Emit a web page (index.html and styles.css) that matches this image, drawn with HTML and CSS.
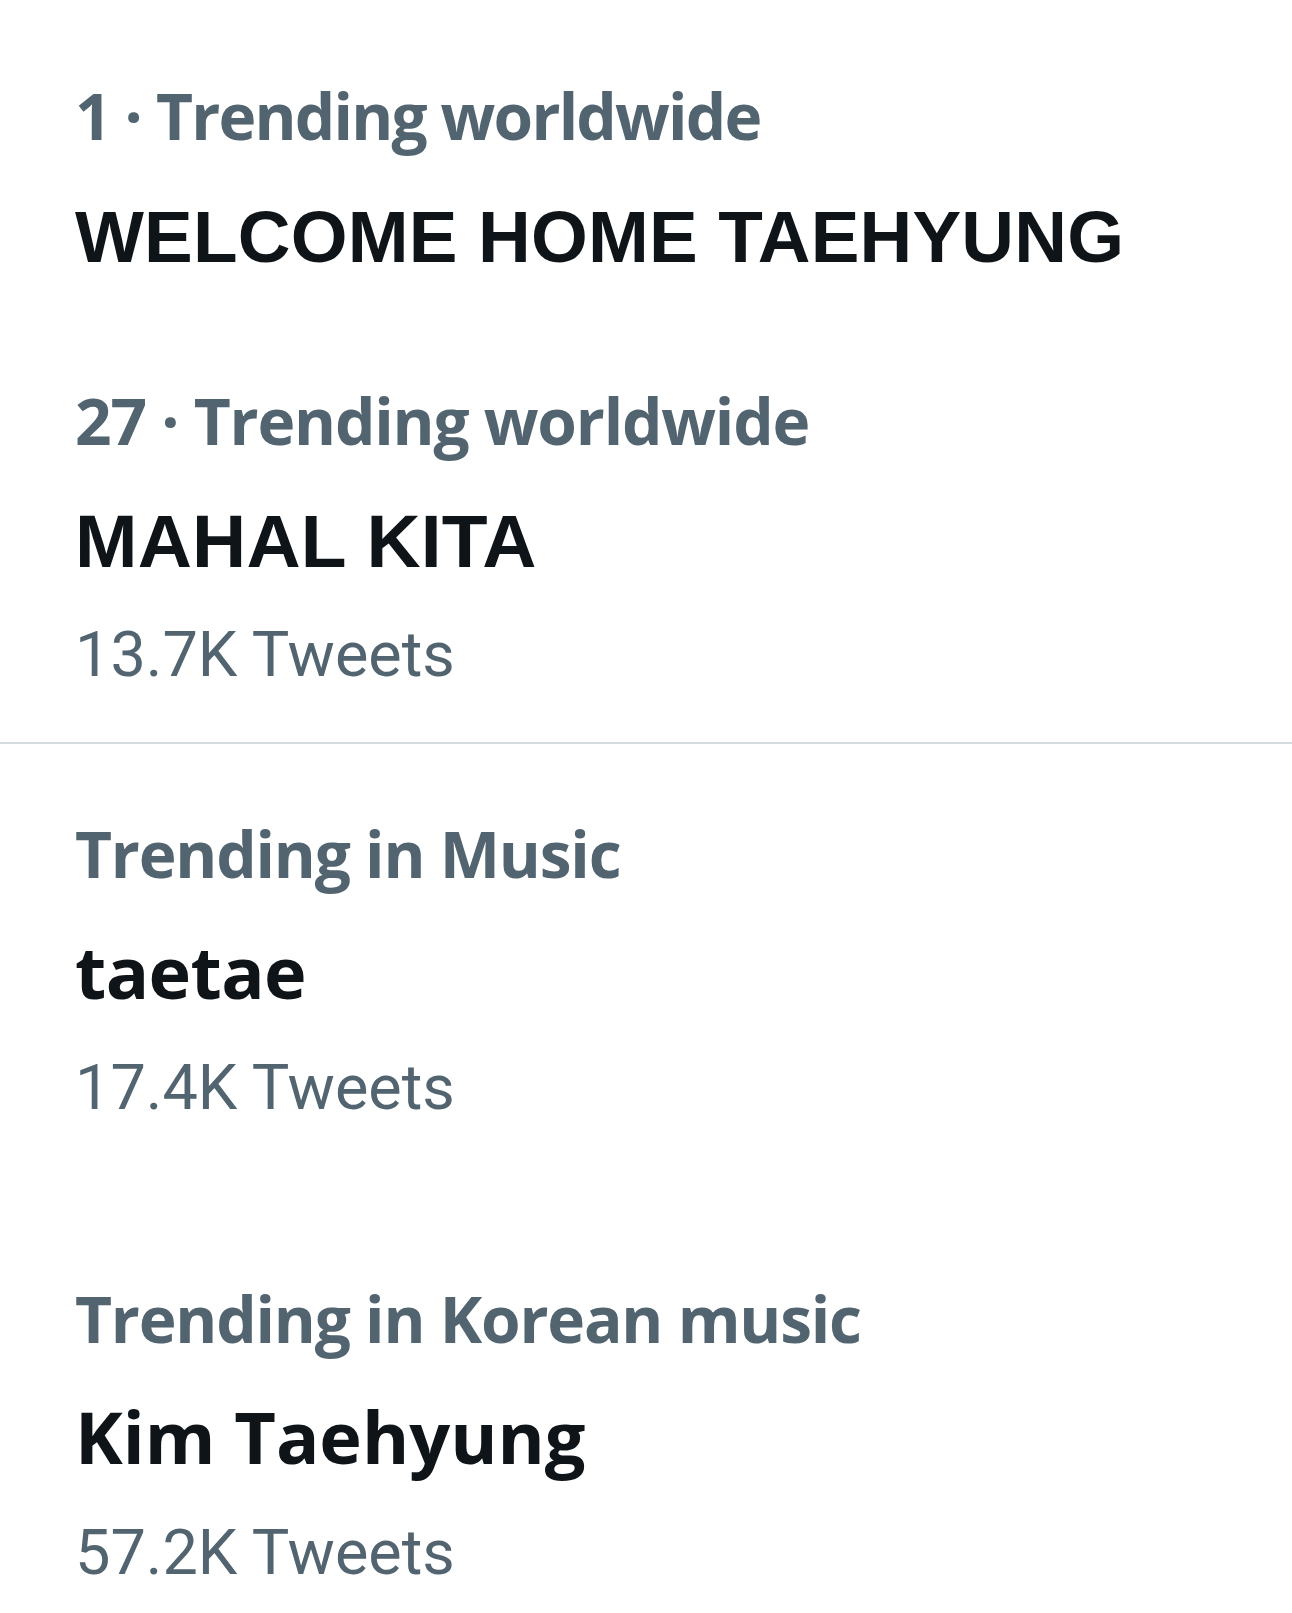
FILE: index.html
```
<!DOCTYPE html>
<html lang="en">
<head>
    <meta charset="UTF-8">
    <meta name="viewport" content="width=device-width, initial-scale=1.0">
    <title>Trends</title>
    <link rel="stylesheet" href="styles.css">
</head>
<body>
    <div class="trends">
        <div class="trend first">
            <div class="label">1 · Trending worldwide</div>
            <div class="title caps">WELCOME HOME TAEHYUNG</div>
        </div>
        <div class="trend second">
            <div class="label">27 · Trending worldwide</div>
            <div class="title caps">MAHAL KITA</div>
            <div class="count">13.7K Tweets</div>
        </div>
        <div class="divider"></div>
        <div class="trend third">
            <div class="label">Trending in Music</div>
            <div class="title">taetae</div>
            <div class="count">17.4K Tweets</div>
        </div>
        <div class="trend fourth">
            <div class="label">Trending in Korean music</div>
            <div class="title">Kim Taehyung</div>
            <div class="count">57.2K Tweets</div>
        </div>
    </div>
</body>
</html>
```

FILE: styles.css
```
body {
    margin: 0;
    background-color: #ffffff;
    font-family: "Open Sans", sans-serif;
}
.trends {
    display: flex;
    flex-direction: column;
    padding-top: 76px;
}
.trend {
    display: flex;
    flex-direction: column;
    padding-left: 75px;
}
.label {
    font-family: "Open Sans", sans-serif;
    font-weight: 700;
    font-size: 64px;
    line-height: 80px;
    letter-spacing: -1.2px;
    color: #536471;
    white-space: nowrap;
}
.first .label {
    letter-spacing: -1.8px;
}
.title {
    font-family: "Open Sans", sans-serif;
    font-weight: 700;
    font-size: 72px;
    line-height: 90px;
    letter-spacing: -0.6px;
    color: #0f1419;
    margin-top: 32px;
    white-space: nowrap;
}
.fourth .title {
    letter-spacing: 0;
}
.title.caps {
    font-family: "Liberation Sans", Arial, sans-serif;
    font-size: 73px;
    letter-spacing: 0.2px;
    margin-top: 36px;
}
.second .title.caps {
    font-size: 75px;
    margin-top: 35px;
}
.count {
    font-family: Roboto, sans-serif;
    font-weight: 400;
    font-size: 63px;
    line-height: 80px;
    color: #536471;
    margin-top: 32px;
    white-space: nowrap;
}
.second .count {
    margin-top: 29px;
}
.second {
    margin-top: 99px;
}
.divider {
    height: 2px;
    background-color: #d4dcdf;
    margin-top: 47px;
}
.third {
    margin-top: 70px;
}
.fourth {
    margin-top: 151px;
}
```
